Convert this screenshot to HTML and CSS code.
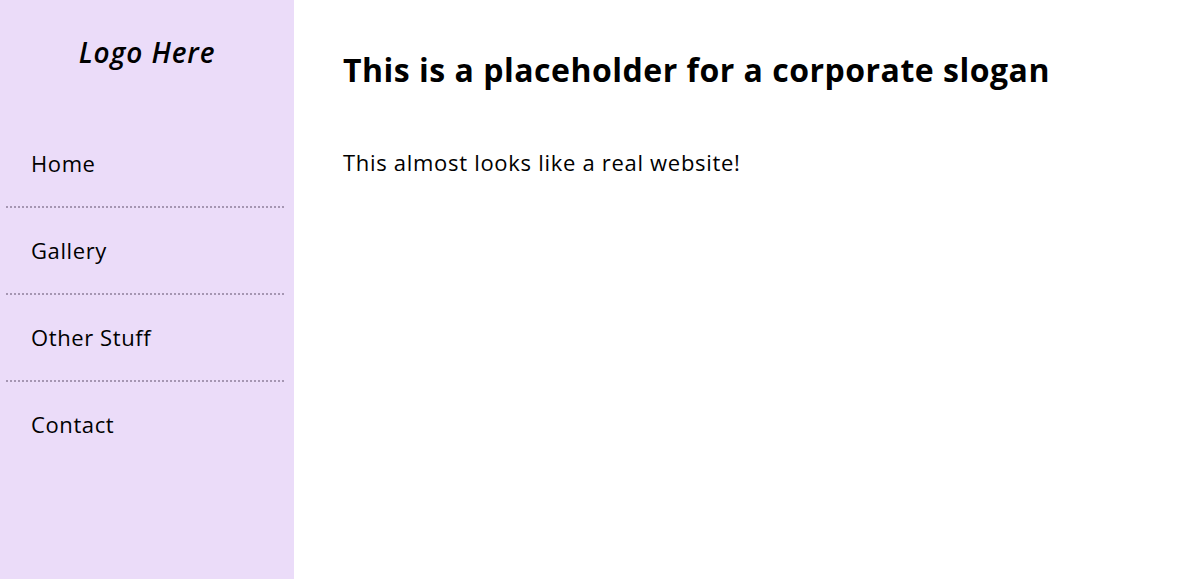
FILE: index.html
```html
<!DOCTYPE html>
<html>
<head>
<meta charset="utf-8">
<link rel="stylesheet" href="styles.css">
</head>
<body>
<div class="page">
  <aside class="sidebar">
    <div class="logo">Logo Here</div>
    <ul class="nav">
      <li>Home</li>
      <li>Gallery</li>
      <li>Other Stuff</li>
      <li>Contact</li>
    </ul>
  </aside>
  <main class="content">
    <h1>This is a placeholder for a corporate slogan</h1>
    <p>This almost looks like a real website!</p>
  </main>
</div>
</body>
</html>
```
FILE: styles.css
```css
html, body { margin: 0; padding: 0; height: 100%; }
body { font-family: "Open Sans", "Lato", sans-serif; color: #000; background: #fff; }
.page { display: flex; min-height: 100%; }
.sidebar { width: 294px; flex: 0 0 294px; background: #ebdcf9; padding: 0 10px 0 6px; box-sizing: border-box; }
.logo { font-style: italic; font-weight: 600; font-size: 28px; letter-spacing: 0.9px; text-align: center; padding-top: 33px; height: 88px; box-sizing: border-box; padding-left: 4px; }
.nav { list-style: none; margin: 33px 0 0; padding: 0; }
.nav li { font-size: 22px; letter-spacing: 0.6px; padding: 0 0 0 25px; height: 87px; line-height: 85px; box-sizing: border-box; background-image: repeating-linear-gradient(to right, #a596b2 0 2px, transparent 2px 4px); background-size: 100% 2px; background-position: left bottom; background-repeat: no-repeat; }
.nav li:last-child { background: none; }
.content { flex: 1; padding: 0 49px; }
.content h1 { font-size: 32px; font-weight: 700; letter-spacing: 0.5px; margin: 48px 0 0; }
.content p { font-size: 22px; letter-spacing: 0.7px; margin: 56px 0 0; }
```
